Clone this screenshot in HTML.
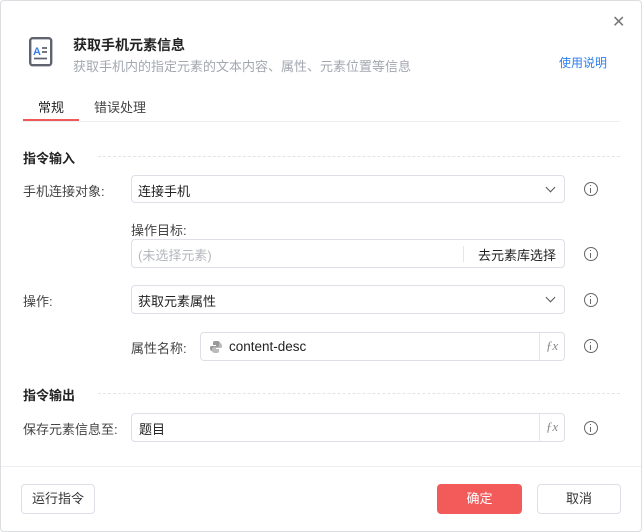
<!DOCTYPE html>
<html><head><meta charset="utf-8"><style>
*{box-sizing:border-box;margin:0;padding:0}
body{width:642px;height:532px;background:#fff;font-family:"Liberation Sans","Noto Sans CJK SC",sans-serif;font-size:13px;color:#333;position:relative;overflow:hidden}
.frame{position:absolute;left:0;top:0;width:642px;height:532px;border:1px solid #dcdde0;border-radius:4px}
.a{position:absolute;white-space:nowrap}
.box{position:absolute;border:1px solid #dcdfe6;border-radius:4px;background:#fff}
.info{position:absolute;width:14px;height:14px;border:1.2px solid #666;border-radius:50%}
.info:before{content:"";position:absolute;left:5px;top:2px;width:1.4px;height:1.4px;background:#666}
.info:after{content:"";position:absolute;left:5px;top:5px;width:1.4px;height:5px;background:#666}
.chev{position:absolute;right:10px;top:8px;width:7px;height:7px;border-right:1.3px solid #555;border-bottom:1.3px solid #555;transform:rotate(45deg)}
.fx{position:absolute;right:0;top:0;bottom:0;width:25px;border-left:1px solid #e4e6eb;font-family:"Liberation Serif",serif;font-style:italic;color:#888;font-size:13px;text-align:center;line-height:26px}
.dash{position:absolute;height:0;border-top:1px dashed #e2e4e8}
.btn{position:absolute;border:1px solid #dcdfe6;border-radius:4px;text-align:center;line-height:28px;font-size:13px}
</style></head><body>
<div class="frame"></div>
<div class="a" style="left:612px;top:12px;font-size:16px;color:#777">✕</div>
<svg class="a" style="left:29px;top:37px" width="24" height="30" viewBox="0 0 24 30"><rect x="1.2" y="1.2" width="21" height="27" rx="2.5" fill="none" stroke="#5f6470" stroke-width="2.4"/><text x="4" y="18" font-size="11" font-weight="bold" fill="#3b7cf0" font-family="Liberation Sans">A</text><path d="M13 11h5M13 15h5M5 21.5h13" stroke="#5f6470" stroke-width="1.8"/></svg>
<div class="a" style="left:73px;top:35px;font-size:14px;font-weight:bold;color:#222">获取手机元素信息</div>
<div class="a" style="left:73px;top:56px;font-size:13px;color:#a3a7b0">获取手机内的指定元素的文本内容、属性、元素位置等信息</div>
<div class="a" style="left:559px;top:54px;font-size:12px;color:#2b7ef0">使用说明</div>
<div class="a" style="left:38px;top:97px;font-size:13px;color:#222">常规</div>
<div class="a" style="left:94px;top:97px;font-size:13px;color:#444">错误处理</div>
<div class="a" style="left:23px;top:121px;width:597px;height:1px;background:#eceef1"></div>
<div class="a" style="left:23px;top:119px;width:56px;height:2px;background:#f0595b"></div>

<div class="a" style="left:23px;top:148px;font-weight:bold;color:#222">指令输入</div>
<div class="dash" style="left:98px;top:156px;width:522px"></div>

<div class="a" style="left:23px;top:181px;color:#444">手机连接对象:</div>
<div class="box" style="left:131px;top:175px;width:434px;height:28px"><span class="a" style="left:6px;top:5px;color:#222">连接手机</span><span class="chev"></span></div>
<div class="info" style="left:584px;top:182px"></div>

<div class="a" style="left:131px;top:220px;color:#444">操作目标:</div>
<div class="box" style="left:131px;top:239px;width:434px;height:29px"><span class="a" style="left:6px;top:5px;color:#b4b7bd">(未选择元素)</span><span class="a" style="left:331px;top:6px;height:16px;width:1px;background:#e4e6eb"></span><span class="a" style="left:346px;top:5px;color:#222">去元素库选择</span></div>
<div class="info" style="left:584px;top:247px"></div>

<div class="a" style="left:23px;top:291px;color:#444">操作:</div>
<div class="box" style="left:131px;top:285px;width:434px;height:29px"><span class="a" style="left:6px;top:5px;color:#222">获取元素属性</span><span class="chev"></span></div>
<div class="info" style="left:584px;top:293px"></div>

<div class="a" style="left:131px;top:338px;color:#444">属性名称:</div>
<div class="box" style="left:200px;top:332px;width:365px;height:29px"><svg class="a" style="left:8px;top:7px" width="14" height="14" viewBox="0 0 14 14"><path d="M7 1C4 1 4 2 4 3v2h3v1H2C1 6 1 8 1 8c0 2 1 3 2 3h1V9c0-1 1-2 2-2h3c1 0 2-1 2-2V3c0-1-1-2-4-2z" fill="#999"/><path d="M7 13c3 0 3-1 3-2V9H7V8h5c1 0 1-2 1-2 0-2-1-3-2-3h-1v2c0 1-1 2-2 2H5C4 7 3 8 3 9v2c0 1 1 2 4 2z" fill="#bbb"/></svg><span class="a" style="left:28px;top:6px;color:#222;font-size:13.5px">content-desc</span><span class="fx">ƒx</span></div>
<div class="info" style="left:584px;top:339px"></div>

<div class="a" style="left:23px;top:385px;font-weight:bold;color:#222">指令输出</div>
<div class="dash" style="left:98px;top:393px;width:522px"></div>

<div class="a" style="left:23px;top:419px;color:#444">保存元素信息至:</div>
<div class="box" style="left:131px;top:413px;width:434px;height:29px"><span class="a" style="left:7px;top:5px;color:#222">题目</span><span class="fx">ƒx</span></div>
<div class="info" style="left:584px;top:421px"></div>

<div class="a" style="left:1px;top:466px;width:640px;height:1px;background:#eceef1"></div>
<div class="btn" style="left:21px;top:484px;width:74px;height:30px;color:#333">运行指令</div>
<div class="btn" style="left:437px;top:484px;width:85px;height:30px;background:#f35a5a;border-color:#f35a5a;color:#fff">确定</div>
<div class="btn" style="left:537px;top:484px;width:84px;height:30px;color:#333">取消</div>
</body></html>
